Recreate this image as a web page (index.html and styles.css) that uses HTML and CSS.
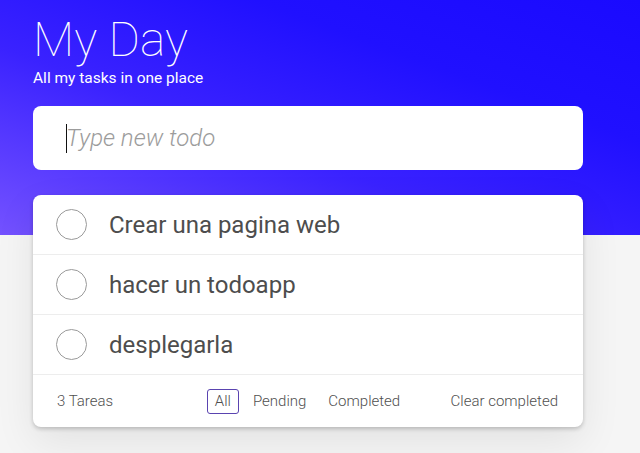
FILE: index.html
```html
<!DOCTYPE html>
<html lang="es">
<head>
<meta charset="utf-8">
<title>My Day</title>
<link rel="stylesheet" href="styles.css">
</head>
<body>
<main class="app">
  <header class="hero">
    <h1 class="title">My Day</h1>
    <p class="subtitle">All my tasks in one place</p>
  </header>
  <label class="input-wrap">
    <input class="new-todo" type="text" placeholder="Type new todo">
    <span class="caret"></span>
  </label>
  <section class="card">
    <ul class="todo-list">
      <li class="todo"><span class="check"></span><span class="label">Crear una pagina web</span></li>
      <li class="todo"><span class="check"></span><span class="label">hacer un todoapp</span></li>
      <li class="todo"><span class="check"></span><span class="label">desplegarla</span></li>
    </ul>
    <footer class="footer">
      <span class="count">3 Tareas</span>
      <nav class="filters">
        <a class="filter selected">All</a>
        <a class="filter">Pending</a>
        <a class="filter">Completed</a>
      </nav>
      <button class="clear">Clear completed</button>
    </footer>
  </section>
</main>
</body>
</html>
```
FILE: styles.css
```css
* { box-sizing: border-box; }
html, body { height: 100%; }
body {
  margin: 0;
  font-family: Roboto, "Noto Sans", "Liberation Sans", sans-serif;
  background:
    linear-gradient(to top right, #7452ff 0%, #3a22ff 40%, #2010ff 70%, #1a0aff 100%) no-repeat top left / 100% 235px,
    #f5f5f5;
}
.app {
  width: 550px;
  margin-left: 33px;
  display: flex;
  flex-direction: column;
}
.hero { padding-top: 16px; color: #fff; }
.title {
  margin: 0;
  font-size: 48px;
  line-height: 48px;
  font-weight: 100;
}
.subtitle {
  margin: 4px 0 0;
  font-size: 15.5px;
  line-height: 20px;
  font-weight: 400;
}
.input-wrap {
  position: relative;
  display: block;
  margin-top: 18px;
}
.new-todo {
  display: block;
  height: 64px;
  width: 100%;
  border: 0;
  border-radius: 8px;
  background: #fff;
  padding: 0 20px 0 33px;
  font-family: inherit;
  font-size: 24px;
  font-style: italic;
  font-weight: 300;
  color: #4d4d4d;
  outline: none;
}
.new-todo::placeholder { color: #9c9c9c; font-style: italic; }
.caret {
  position: absolute;
  left: 33px;
  top: 18px;
  width: 1px;
  height: 29px;
  background: #111;
}
.card {
  margin-top: 25px;
  background: #fff;
  border-radius: 8px;
  box-shadow: 0 2px 4px rgba(0,0,0,0.2), 0 15px 40px rgba(0,0,0,0.08);
}
.todo-list { list-style: none; margin: 0; padding: 0; }
.todo {
  height: 60px;
  display: flex;
  align-items: center;
  padding-left: 23px;
  border-bottom: 1px solid #ededed;
  gap: 22px;
}
.check {
  width: 31px;
  height: 31px;
  border: 1px solid #9a9a9a;
  border-radius: 50%;
  flex: none;
}
.label {
  font-size: 24px;
  color: #4d4d4d;
  font-weight: 400;
}
.footer {
  height: 52px;
  display: grid;
  grid-template-columns: 1fr auto 1fr;
  align-items: center;
  padding: 0 25px 0 24px;
  font-size: 15px;
  font-weight: 300;
  color: #4f4f4f;
}
.count { justify-self: start; }
.filters { display: flex; }
.filter {
  margin: 3px;
  padding: 3px 7px;
  border: 1px solid transparent;
  border-radius: 3px;
  line-height: 17px;
  color: #4f4f4f;
}
.filter.selected { border-color: #5a44b0; }
.clear {
  justify-self: end;
  border: 0;
  background: none;
  padding: 0;
  font: inherit;
  color: #4f4f4f;
}
```
